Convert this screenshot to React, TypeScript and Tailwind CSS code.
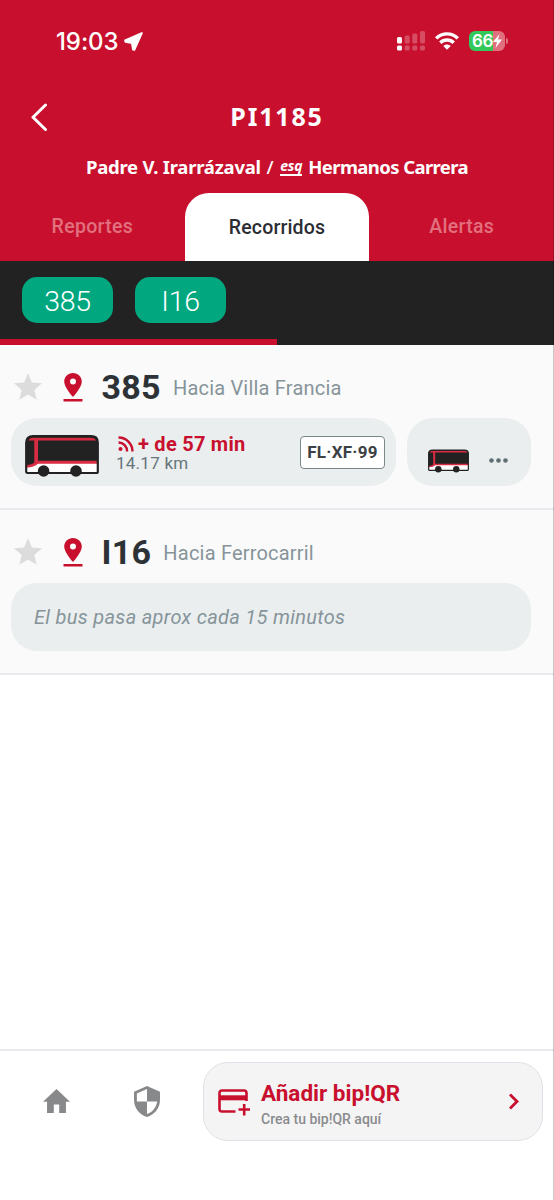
import React from 'react';

type BusProps = { className: string };

const Bus: React.FC<BusProps> = ({ className }) => (
  <svg className={className} viewBox="0 0 74 42" fill="none">
    <path d="M1.500 37V7.500Q1.500 1.500 8 1.500H66Q72.500 1.500 72.500 7.500V37Q72.500 38 71.500 38H2.500Q1.500 38 1.500 37Z" fill="#fff" />
    <path d="M1 31V8Q1 1 8 1H66Q73 1 73 8V27H12L8 31Z" fill="#222" />
    <path d="M4 4.500Q5 2.700 8 2.700H66Q69 2.700 70.500 4.500L71 5.500H13V25.800H73V28.800H13Q9 32.500 2 32.500V29.800Q7 29.800 9.300 27.500V5.500H3.500Z" fill="#d92c43" />
    <path d="M1.200 36.500V7.500Q1.200 1.200 8 1.200H66Q72.800 1.200 72.800 7.500V36.500Q72.800 38 71.500 38H2.500Q1.200 38 1.200 36.500Z" stroke="#222" strokeWidth="2.200" />
    <circle cx="18.600" cy="36" r="5.800" fill="#222" />
    <circle cx="51" cy="36" r="5.800" fill="#222" />
  </svg>
);

const StopPin = () => (
  <svg className="ml-[21px] mt-px w-5 h-[29px] shrink-0" viewBox="0 0 20 29" fill="#c8102e">
    <path fillRule="evenodd" d="M10 0C5 0 1.200 3.700 1.200 8.500C1.200 14.500 10 24 10 24S18.800 14.500 18.800 8.500C18.800 3.700 15 0 10 0ZM10 5.500A3 3 0 1 1 10 11.500A3 3 0 0 1 10 5.500Z" />
    <path d="M0.500 26H19.500V28.500H0.500Z" />
  </svg>
);

const Star = () => (
  <svg className="ml-[14px] mb-px w-7 h-[27px] shrink-0" viewBox="2 2 20 19" fill="#dcdcdc">
    <path d="M12 17.270L18.180 21l-1.640-7.030L22 9.240l-7.190-.610L12 2 9.190 8.630 2 9.240l5.460 4.730L5.820 21z" />
  </svg>
);

type RouteProps = { code: string; dest: string; children: React.ReactNode };

const Route: React.FC<RouteProps> = ({ code, dest, children }) => (
  <section className="h-[165px] border-b-2 border-[#e8e9ec] bg-[#fafafa]">
    <div className="flex items-center h-[73px] pt-[11px]">
      <Star />
      <StopPin />
      <h2 className="ml-[18.500px] font-bold text-[34px] text-[#2d3236] tracking-[0.300px]">{code}</h2>
      <p className="ml-[12px] mt-px text-[20px] text-[#86949a] tracking-[0.200px]">{dest}</p>
    </div>
    <div className="flex gap-[11px] pl-[11px] pr-[23px]">{children}</div>
  </section>
);

const StatusBar = () => (
  <div className="flex items-center h-[82px] pl-[56px] pr-[46px] text-white">
    <span className="mt-[2px] font-['Inter'] font-medium text-[24px] tracking-[-0.100px]">19:03</span>
    <svg className="ml-[6px] w-[19px] h-[19px]" viewBox="0 0 19 19" fill="#fff" stroke="#fff" strokeWidth="2" strokeLinejoin="round">
      <path d="M17.800 1.200L1.200 8.500L1.500 9.800L8 10.900L9 17.500L10.300 17.800Z" />
    </svg>
    <svg className="ml-auto w-[28px] h-[20px]" viewBox="0 0 28 20" fill="#fff">
      <rect x="0" y="6" width="5" height="6.500" rx="1.500" />
      <rect x="0" y="14.500" width="5" height="5" rx="1.500" />
      <g opacity=".25">
        <rect x="7.700" y="4.500" width="5" height="8" rx="1.500" />
        <rect x="7.700" y="14.500" width="5" height="5" rx="1.500" />
        <rect x="15.300" y="2.500" width="5" height="10" rx="1.500" />
        <rect x="15.300" y="14.500" width="5" height="5" rx="1.500" />
        <rect x="23" y="0" width="5" height="12.500" rx="1.500" />
        <rect x="23" y="14.500" width="5" height="5" rx="1.500" />
      </g>
    </svg>
    <svg className="ml-[10px] w-[24px] h-[18px]" viewBox="0 0 24 18" fill="none" stroke="#fff" strokeWidth="3.400">
      <path d="M1.200 6.400C7.200 0.300 16.800 0.300 22.800 6.400" />
      <path d="M5.300 10.800C9 7.100 15 7.100 18.700 10.800" />
      <path d="M12 17.800L8.300 14C10.500 12 13.500 12 15.700 14Z" fill="#fff" stroke="none" />
    </svg>
    <div className="ml-[10px] flex items-center">
      <div className="flex items-center w-[36px] h-5 rounded-[6px] overflow-hidden bg-linear-to-r from-[#34c759] from-67% to-[#e1707f] to-67%">
        <span className="ml-[3px] font-['Inter'] font-semibold text-[17px] leading-5 tracking-[-0.300px]">66</span>
        <svg className="w-[9px] h-[14px]" viewBox="0 0 9 14" fill="#fff">
          <path d="M6.500 0L0 8H4L2.500 14L9 5.500H5Z" />
        </svg>
      </div>
      <div className="ml-[1px] w-[2px] h-[6px] rounded-r-full bg-[#e1707f]" />
    </div>
  </div>
);

const Header = () => (
  <header className="h-[261px] bg-[#c8102e] text-white">
    <StatusBar />
    <div className="grid grid-cols-[1fr_auto_1fr] items-center h-[69px]">
      <button className="ml-[31px] w-4">
        <svg className="w-4 h-7" viewBox="0 0 16 28" fill="none" stroke="#fff" strokeWidth="3" strokeLinecap="round" strokeLinejoin="round">
          <path d="M14.500 2L2 14.200L14.500 26.500" />
        </svg>
      </button>
      <h1 className="font-['Noto_Sans'] font-bold text-[25px] tracking-[1.800px]">PI1185</h1>
      <span />
    </div>
    <p className="flex items-center justify-center h-[31px] font-['Noto_Sans'] font-bold text-[18.500px] tracking-[-0.250px] whitespace-pre">
      Padre V. Irarrázaval <span className="ml-[1px] font-medium">/</span>
      <span className="ml-[7px] mr-[6px] text-[14px] leading-4 italic border-b-2 border-white">esq</span>
      <span className="tracking-[-0.600px]">Hermanos Carrera</span>
    </p>
    <nav className="grid grid-cols-3 mt-[11px] h-[68px] font-['Roboto'] font-medium text-[19.500px] text-[#e2707f]">
      <a className="flex items-center justify-center tracking-[0.300px]">Reportes</a>
      <a className="flex items-center justify-center pt-px rounded-t-[24px] bg-white text-[#2b2d33] tracking-[0.150px]">Recorridos</a>
      <a className="flex items-center justify-center tracking-[0.300px]">Alertas</a>
    </nav>
  </header>
);

const App: React.FC = () => {
  const chips = ['385', 'I16'];

  return (
    <div className="relative flex flex-col w-[554px] h-[1200px] overflow-hidden bg-white font-['Roboto',sans-serif]">
      <Header />
      <div className="flex flex-col justify-between h-[84px] shrink-0 bg-[#222]">
        <div className="flex gap-[22px] pl-[22px] pt-4">
          {chips.map((chip) => (
            <span key={chip} className="flex items-center justify-center w-[91px] h-[46px] pt-[4px] rounded-[15px] bg-[#00a77f] text-white font-light text-[28.500px] tracking-[-0.300px]">
              {chip}
            </span>
          ))}
        </div>
        <div className="w-1/2 h-[6px] bg-[#c8102e]" />
      </div>

      <Route code="385" dest="Hacia Villa Francia">
        <div className="flex items-center w-[385px] h-[68px] rounded-[26px] bg-[#eaeeef]">
          <Bus className="ml-[14px] mt-[8px] w-[74px] h-[42px]" />
          <div className="ml-[17px] pt-[2px]">
            <div className="flex items-center h-[20px] text-[#c8102e]">
              <svg className="ml-[2px] w-[16px] h-[16px]" viewBox="0 0 16 16" fill="none" stroke="currentColor" strokeWidth="2.400">
                <circle cx="2.500" cy="13" r="2" fill="currentColor" stroke="none" />
                <path d="M0.500 6.500A8.500 8.500 0 0 1 9 15.500M0.500 1.500A14 14 0 0 1 14.500 15.500" />
              </svg>
              <span className="ml-[4px] font-bold text-[20px] leading-[20px] tracking-[0.250px]">+ de 57 min</span>
            </div>
            <p className="text-[17px] leading-[18px] text-[#66757a] tracking-[0.250px]">14.17 km</p>
          </div>
          <span className="ml-auto mr-[11px] flex items-center justify-center w-[85px] h-[33px] pt-px border border-[#7c878c] rounded-[4px] bg-white font-bold text-[17px] text-[#3d4145] tracking-[0.250px]">
            FL·XF·99
          </span>
        </div>
        <div className="flex items-center w-[124px] h-[68px] rounded-[26px] bg-[#eaeeef]">
          <Bus className="ml-[21px] mt-[17px] w-[41px] h-[24px]" />
          <svg className="ml-[20px] mt-[17px] w-[19px] h-[5px]" viewBox="0 0 19 5" fill="#5f6e73">
            <circle cx="2.500" cy="2.500" r="2.300" />
            <circle cx="9.500" cy="2.500" r="2.300" />
            <circle cx="16.500" cy="2.500" r="2.300" />
          </svg>
        </div>
      </Route>

      <Route code="I16" dest="Hacia Ferrocarril">
        <p className="flex items-center w-[520px] h-[68px] pl-[23px] rounded-[26px] bg-[#eaeeef] italic text-[20px] text-[#86949a] tracking-[0.300px]">
          El bus pasa aprox cada 15 minutos
        </p>
      </Route>

      <footer className="flex items-start mt-auto h-[151px] border-t-2 border-[#e8e9ec] pt-[11px]">
        <svg className="ml-[43px] mt-[27px] w-[27px] h-[24px]" viewBox="2 3 20 17" preserveAspectRatio="none" fill="#88898b">
          <path d="M10 20v-6h4v6h5v-8h3L12 3 2 12h3v8z" />
        </svg>
        <svg className="ml-[64px] mt-[24px] w-[26px] h-[31px]" viewBox="3 1 18 22" preserveAspectRatio="none" fill="#88898b">
          <path d="M12 1L3 5v6c0 5.550 3.840 10.740 9 12 5.160-1.260 9-6.450 9-12V5l-9-4zm0 10.990h7c-.530 4.120-3.280 7.790-7 8.940V12H5V6.300l7-3.110v8.800z" />
        </svg>
        <button className="flex items-center ml-[43px] w-[340px] h-[79px] border border-[#e0e1e8] rounded-[25px] bg-[#f4f4f5] text-left">
          <svg className="ml-[14px] mt-[2px] w-[32px] h-[27px]" viewBox="0 0 32 27" fill="none" stroke="#c8102e" strokeWidth="2.600">
            <path d="M17.500 22.500H4Q1.500 22.500 1.500 20V4Q1.500 1.500 4 1.500H26Q28.500 1.500 28.500 4V12" />
            <path d="M1 8.800H29" strokeWidth="5" />
            <path d="M20.500 20.500H32M26.200 15V26.500" />
          </svg>
          <span className="ml-[11px] flex flex-col pt-[7px]">
            <span className="font-bold text-[22.500px] leading-[26px] text-[#c8102e]">Añadir bip!QR</span>
            <span className="mt-px font-medium text-[14px] leading-[24px] text-[#8a8b8d]">Crea tu bip!QR aquí</span>
          </span>
          <svg className="ml-auto mr-[22px] w-[12px] h-[17px]" viewBox="0 0 12 17" fill="none" stroke="#c8102e" strokeWidth="2.800">
            <path d="M2 1.500L9 8.500L2 15.500" />
          </svg>
        </button>
      </footer>
      <div className="absolute right-0 inset-y-0 w-px bg-black/20" />
    </div>
  );
};

export default App;
